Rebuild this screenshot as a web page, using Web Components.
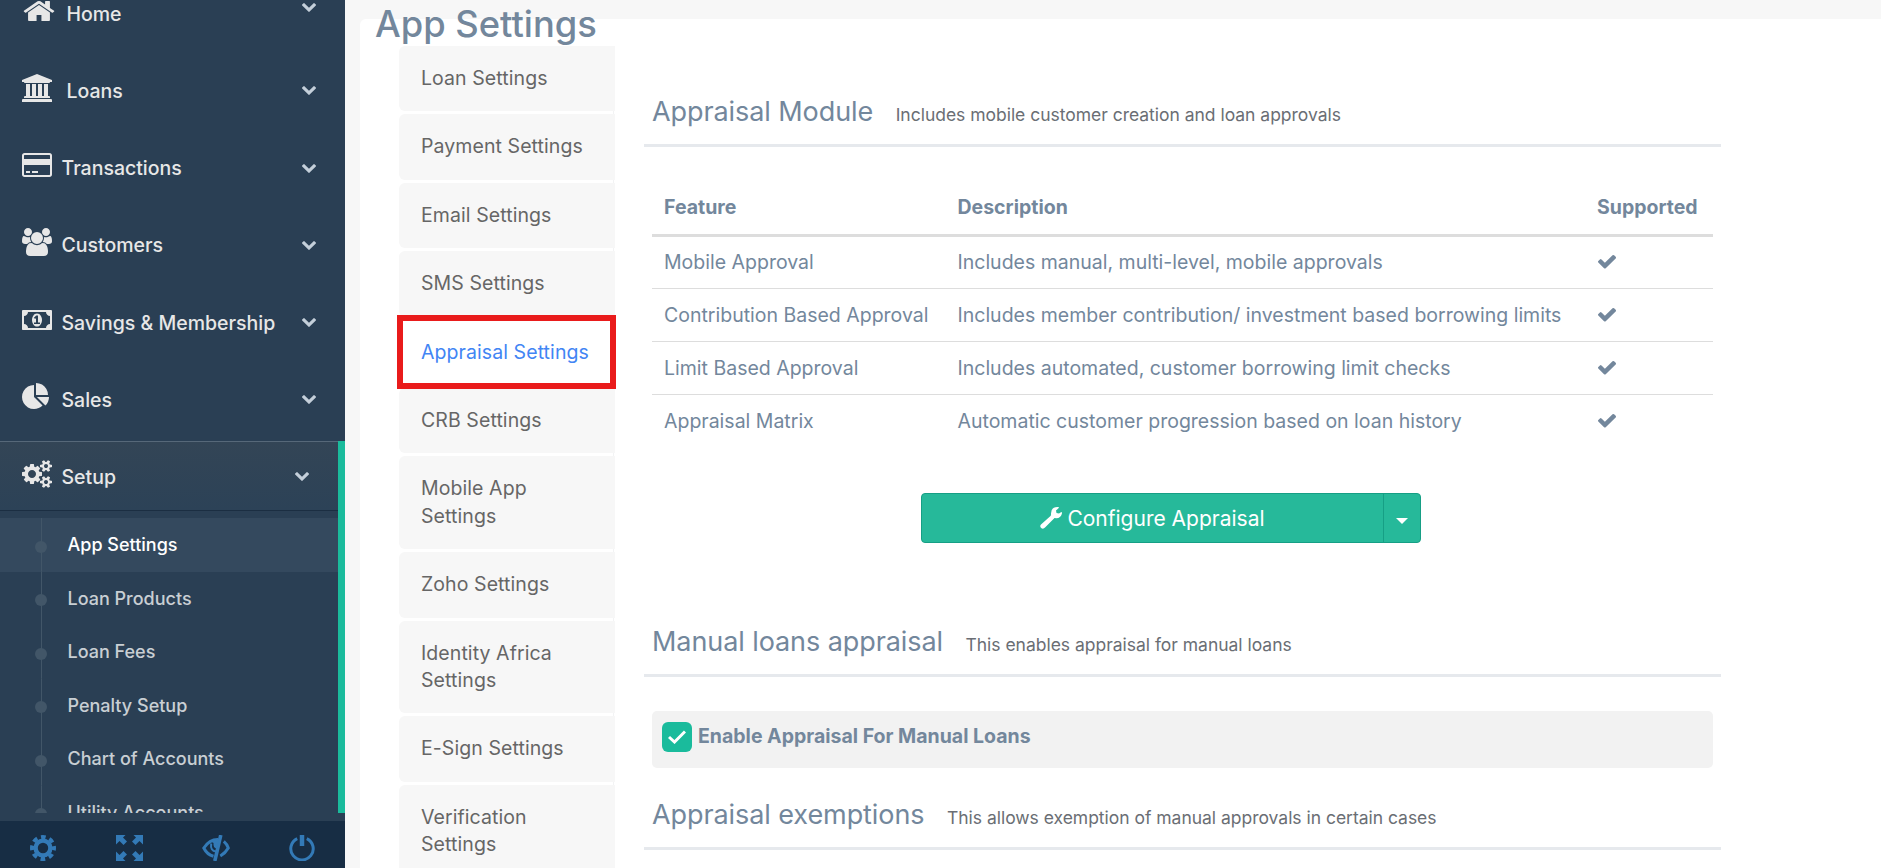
<!DOCTYPE html>
<html lang="en">
<head>
<meta charset="utf-8">
<title>App Settings</title>
<style>
  body {
    margin: 0;
    height: 868px;
    overflow: hidden;
    background: #f7f7f7;
    font-family: Inter, "Liberation Sans", sans-serif;
    font-size: 19.5px;
    color: #73879c;
  }
</style>
</head>
<body>
<app-shell>
  <side-menu slot="side">
    <menu-item icon="home" wide>Home</menu-item>
    <menu-item icon="bank" wide>Loans</menu-item>
    <menu-item icon="card">Transactions</menu-item>
    <menu-item icon="users">Customers</menu-item>
    <menu-item icon="money">Savings &amp; Membership</menu-item>
    <menu-item icon="pie">Sales</menu-item>
    <menu-item icon="cogs" active>Setup
      <sub-item slot="sub" current>App Settings</sub-item>
      <sub-item slot="sub">Loan Products</sub-item>
      <sub-item slot="sub">Loan Fees</sub-item>
      <sub-item slot="sub">Penalty Setup</sub-item>
      <sub-item slot="sub">Chart of Accounts</sub-item>
      <sub-item slot="sub">Utility Accounts</sub-item>
    </menu-item>
  </side-menu>
  <page-title slot="title">App Settings</page-title>
  <tab-list slot="tabs">
    <tab-item>Loan Settings</tab-item>
    <tab-item>Payment Settings</tab-item>
    <tab-item>Email Settings</tab-item>
    <tab-item>SMS Settings</tab-item>
    <tab-item active>Appraisal Settings</tab-item>
    <tab-item>CRB Settings</tab-item>
    <tab-item>Mobile App Settings</tab-item>
    <tab-item>Zoho Settings</tab-item>
    <tab-item>Identity Africa Settings</tab-item>
    <tab-item>E-Sign Settings</tab-item>
    <tab-item>Verification Settings</tab-item>
  </tab-list>
  <section-title note="Includes mobile customer creation and loan approvals">Appraisal Module</section-title>
  <feature-table></feature-table>
  <split-button>Configure Appraisal</split-button>
  <section-title note="This enables appraisal for manual loans">Manual loans appraisal</section-title>
  <check-row>Enable Appraisal For Manual Loans</check-row>
  <section-title note="This allows exemption of manual approvals in certain cases">Appraisal exemptions</section-title>
</app-shell>

<script>
const icons = {
  home: ['0 0 1792 1792', '<path d="M1472 992v480q0 26-19 45t-45 19h-384v-384h-256v384h-384q-26 0-45-19t-19-45v-480q0-1 .5-3t.5-3l575-474 575 474q1 2 1 6zm223-69l-62 74q-8 9-21 11h-3q-13 0-21-7l-692-577-692 577q-12 8-24 7-13-2-21-11l-62-74q-8-10-7-23.5t11-21.5l719-599q32-26 76-26t76 26l244 204v-195q0-14 9-23t23-9h192q14 0 23 9t9 23v408l219 182q10 8 11 21.5t-7 23.5z"/>'],
  bank: ['0 0 1920 1792', '<path d="M960 0l960 384v128h-128q0 26-20.5 45t-48.5 19h-1526q-28 0-48.5-19t-20.5-45h-128v-128zm-704 640h256v768h128v-768h256v768h128v-768h256v768h128v-768h256v768h59q28 0 48.5 19t20.5 45v64h-1664v-64q0-26 20.5-45t48.5-19h59v-768zm1595 960q28 0 48.5 19t20.5 45v128h-1920v-128q0-26 20.5-45t48.5-19h1782z"/>'],
  card: ['0 0 1920 1792', '<path d="M1760 128q66 0 113 47t47 113v1216q0 66-47 113t-113 47h-1600q-66 0-113-47t-47-113v-1216q0-66 47-113t113-47h1600zm-1600 128q-13 0-22.5 9.5t-9.5 22.5v224h1664v-224q0-13-9.5-22.5t-22.5-9.5h-1600zm1600 1280q13 0 22.5-9.5t9.5-22.5v-608h-1664v608q0 13 9.5 22.5t22.5 9.5h1600zm-1504-128v-128h256v128h-256zm384 0v-128h384v128h-384z"/>'],
  users: ['0 0 1920 1792', '<path d="M593 896q-162 5-265 128h-134q-82 0-138-40.5t-56-118.5q0-353 124-353 6 0 43.5 21t97.5 42.5 119 21.5q67 0 133-23-5 37-5 66 0 139 81 256zm1071 637q0 120-73 189.5t-194 69.5h-874q-121 0-194-69.5t-73-189.5q0-53 3.5-103.5t14-109 26.5-108.5 43-97.5 62-81 85.5-53.5 111.5-20q10 0 43 21.5t73 48 107 48 135 21.5 135-21.5 107-48 73-48 43-21.5q61 0 111.5 20t85.5 53.5 62 81 43 97.5 26.5 108.5 14 109 3.5 103.5zm-1024-1277q0 106-75 181t-181 75-181-75-75-181 75-181 181-75 181 75 75 181zm704 384q0 159-112.5 271.5t-271.5 112.5-271.5-112.5-112.5-271.5 112.5-271.5 271.5-112.5 271.5 112.5 112.5 271.5zm576 225q0 78-56 118.5t-138 40.5h-134q-103-123-265-128 81-117 81-256 0-29-5-66 66 23 133 23 59 0 119-21.5t97.5-42.5 43.5-21q124 0 124 353zm-128-609q0 106-75 181t-181 75-181-75-75-181 75-181 181-75 181 75 75 181z"/>'],
  money: ['0 0 1920 1792', '<path d="M768 1152h384v-96h-128v-448h-114l-148 137 77 80q42-37 55-57h2v288h-128v96zm512-256q0 70-21 142t-59.5 134-101.5 101-138 39-138-39-101.5-101-59.5-134-21-142 21-142 59.5-134 101.5-101 138-39 138 39 101.5 101 59.5 134 21 142zm512 256v-512q-106 0-181-75t-75-181h-1152q0 106-75 181t-181 75v512q106 0 181 75t75 181h1152q0-106 75-181t181-75zm128-832v1152q0 26-19 45t-45 19h-1792q-26 0-45-19t-19-45v-1152q0-26 19-45t45-19h1792q26 0 45 19t19 45z"/>'],
  pie: ['0 0 1792 1792', '<path d="M768 890l546 546q-106 108-247.5 168t-298.5 60q-209 0-385.5-103t-279.5-279.5-103-385.5 103-385.5 279.5-279.5 385.5-103v762zm187 6h773q0 157-60 298.5t-168 247.5zm709-128h-768v-768q209 0 385.5 103t279.5 279.5 103 385.5z"/>'],
  cogs: ['0 0 1920 1792', '<path d="M896 896q0-106-75-181t-181-75-181 75-75 181 75 181 181 75 181-75 75-181zm768 512q0-52-38-90t-90-38-90 38-38 90q0 53 37.5 90.5t90.5 37.5 90.5-37.5 37.5-90.5zm0-1024q0-52-38-90t-90-38-90 38-38 90q0 53 37.5 90.5t90.5 37.5 90.5-37.5 37.5-90.5zm-384 421v185q0 10-7 19.5t-16 10.5l-155 24q-11 35-32 76 34 48 90 115 7 11 7 20 0 12-7 19-23 30-82.5 89.5t-78.5 59.5q-11 0-21-7l-115-90q-37 19-77 31-11 108-23 155-7 24-30 24h-186q-11 0-20-7.5t-10-17.5l-23-153q-34-10-75-31l-118 89q-7 7-20 7-11 0-21-8-144-133-144-160 0-9 7-19 10-14 41-53t47-61q-23-44-35-82l-152-24q-10-1-17-9.5t-7-19.5v-185q0-10 7-19.5t16-10.5l155-24q11-35 32-76-34-48-90-115-7-11-7-20 0-12 7-20 22-30 82-89t79-59q11 0 21 7l115 90q34-18 77-32 11-108 23-154 7-24 30-24h186q11 0 20 7.5t10 17.5l23 153q34 10 75 31l118-89q8-7 20-7 11 0 21 8 144 133 144 160 0 8-7 19-12 16-42 54t-45 60q23 48 34 82l152 23q10 2 17 10.5t7 19.5zm640 533v140q0 16-149 31-12 27-30 52 51 113 51 138 0 4-4 7-122 71-124 71-8 0-46-47t-52-68q-20 2-30 2t-30-2q-14 21-52 68t-46 47q-2 0-124-71-4-3-4-7 0-25 51-138-18-25-30-52-149-15-149-31v-140q0-16 149-31 13-29 30-52-51-113-51-138 0-4 4-7 4-2 35-20t59-34 30-16q8 0 46 46.5t52 67.5q20-2 30-2t30 2q51-71 92-112l6-2q4 0 124 70 4 3 4 7 0 25-51 138 17 23 30 52 149 15 149 31zm0-1024v140q0 16-149 31-12 27-30 52 51 113 51 138 0 4-4 7-122 71-124 71-8 0-46-47t-52-68q-20 2-30 2t-30-2q-14 21-52 68t-46 47q-2 0-124-71-4-3-4-7 0-25 51-138-18-25-30-52-149-15-149-31v-140q0-16 149-31 13-29 30-52-51-113-51-138 0-4 4-7 4-2 35-20t59-34 30-16q8 0 46 46.5t52 67.5q20-2 30-2t30 2q51-71 92-112l6-2q4 0 124 70 4 3 4 7 0 25-51 138 17 23 30 52 149 15 149 31z"/>'],
  down: ['90 533 1612 1035', '<path d="M1683 808l-742 741q-19 19-45 19t-45-19l-742-741q-19-19-19-45.5t19-45.5l166-165q19-19 45-19t45 19l531 531 531-531q19-19 45-19t45 19l166 165q19 19 19 45.5t-19 45.5z"/>'],
  check: ['121 334 1550 1188', '<path d="M1671 566q0 40-28 68l-724 724-136 136q-28 28-68 28t-68-28l-136-136-362-362q-28-28-28-68t28-68l136-136q28-28 68-28t68 28l294 295 656-657q28-28 68-28t68 28l136 136q28 28 28 68z"/>'],
  wrench: ['0 0 22 22', '<path d="M11 6.500Q11 0 17.500 0Q19.500 0 19 .8L16 3.500L16.500 6L19 6.500L21.300 5Q22.300 5 21.800 7Q20.500 12 14.500 11L5 20.500Q3.500 22.300 1.500 21.300Q-.7 19.500 1 17.500L10.500 9Q11.200 8 11 6.500z"/>'],
  gear: ['0 0 26 26', '<g fill="none" stroke="currentColor"><circle cx="13" cy="13" r="7.400" stroke-width="4.400"/><circle cx="13" cy="13" r="11" stroke-width="4" stroke-dasharray="4.700 3.940" stroke-dashoffset="2.350"/></g>'],
  full: ['0 0 27 26', '<path d="M0 0h9.500L7 2.500l4 4L7.500 10l-4-4L0 9.500zM27 0v9.500L23.500 6l-4 4L16 6.500l4-4L17.500 0zM0 26v-9.500L3.500 20l4-4 3.500 3.500-4 4L9.500 26zM27 26h-9.500l2.500-2.500-4-4 3.500-3.500 4 4 3.500-3.500z"/>'],
  eye: ['0 0 28 26', '<g fill="none" stroke="currentColor"><path d="M11.500 21.300Q5 19.500 1.800 13Q7.500 4.300 16 4.500M21.800 6.300Q25 9 26.300 13Q23.500 18 18.300 21" stroke-width="3"/><path d="M9.200 8.500Q8 16 14.200 16.500" stroke-width="2"/><path d="M18.800 0L12.800 26" stroke-width="3.600"/></g><path d="M9 6.500L17 4L14.800 13.500Q11 13 11.500 8z"/>'],
  off: ['0 0 26 26', '<g fill="none" stroke="currentColor"><path d="M8.200 3.600A11.200 11.200 0 1 0 17.800 3.600" stroke-width="3"/><path d="M13 0v11" stroke-width="4.500"/></g>']
}

/**
 * Builds the svg markup of one icon.
 */
const svg = (name, w, h) =>
  `<svg class="icon" width="${w}" height="${h}" viewBox="${icons[name][0]}" preserveAspectRatio="none" fill="currentColor">${icons[name][1]}</svg>`

/**
 * Registers an element whose shadow root comes from a markup function.
 */
const define = (name, markup) => customElements.define(name,
  class extends HTMLElement {
    constructor () {
      super()
      const template = document.createElement('template')
      template.innerHTML = markup(this)
      this.attachShadow({ mode: 'open' }).appendChild(template.content.cloneNode(true))
    }
  }
)

define('app-shell', () => `
  <style>
    :host { display: grid; grid-template-columns: 345px 1fr; height: 868px; overflow: hidden; }
    main { padding: 19px 0 0 15px; min-width: 0; }
    .panel { display: grid; grid-template-columns: 216px 1077px; column-gap: 29px; grid-template-rows: 27px 1fr; box-sizing: border-box; height: 900px; padding-left: 39px; background: #fff; border-radius: 6px 0 0 0; }
    .head { grid-column: 1 / 3; margin-left: -24px; }
    .content { display: flex; flex-direction: column; padding-top: 34px; }
  </style>
  <slot name="side"></slot>
  <main>
    <div class="panel">
      <div class="head"><slot name="title"></slot></div>
      <slot name="tabs"></slot>
      <div class="content"><slot></slot></div>
    </div>
  </main>
`)

define('side-menu', () => `
  <style>
    :host { display: flex; flex-direction: column; height: 868px; background: #2a3f54; color: #e7e7e7; overflow: hidden; }
    nav { height: 813px; flex: none; overflow: hidden; }
    .items { margin-top: -22.5px; }
    footer { display: grid; grid-template-columns: repeat(4, 1fr); justify-items: center; align-items: center; margin-top: 8px; height: 54px; flex: none; background: #172d44; color: #337ab7; }
    svg { display: block; }
  </style>
  <nav><div class="items"><slot></slot></div></nav>
  <footer>${svg('gear', 26, 26)}${svg('full', 27, 26)}${svg('eye', 28, 26)}${svg('off', 26, 26)}</footer>
`)

define('menu-item', el => `
  <style>
    :host { display: block; font-weight: 500; }
    .row { display: flex; align-items: center; box-sizing: border-box; height: 77.25px; padding: 0 29px 5px 22px; }
    .glyph { width: 39.5px; height: 34px; flex: none; }
    :host([wide]) .glyph { width: 44.5px; }
    .text { flex: 1; white-space: nowrap; }
    .arrow { color: #c4cfda; height: 9px; }
    :host([icon="home"]) .arrow { margin-top: -13px; }
    .arrow svg, .glyph svg { display: block; }
    :host([active]) { border-right: 7px solid #1abb9c; }
    :host([active]) .row { height: 70px; padding: 1px 29px 0 22px; border-top: 1px solid #566879; border-bottom: 1px solid #1b2e42; background: linear-gradient(#334556, #2c4257); }
    .sub { display: none; }
    :host([active]) .sub { display: block; padding-top: 7px; }
  </style>
  <div class="row">
    <span class="glyph">${svg(el.getAttribute('icon'), el.getAttribute('icon') === 'home' ? 34 : el.getAttribute('icon') === 'pie' ? 28 : 30, 28)}</span>
    <span class="text"><slot></slot></span>
    <span class="arrow">${svg('down', 14, 9)}</span>
  </div>
  <div class="sub"><slot name="sub"></slot></div>
`)

define('sub-item', () => `
  <style>
    :host { display: flex; align-items: center; height: 53.5px; font-size: 18px; color: rgba(255, 255, 255, .75); }
    :host([current]) { background: #34495e; color: #fff; }
    .rail { display: flex; align-items: center; justify-content: center; width: 12px; height: 100%; margin: 0 20.5px 0 35px; background: linear-gradient(#425668, #425668) center / 1px 100% no-repeat; }
    .dot { width: 12px; height: 12px; border-radius: 50%; background: #425668; position: relative; top: 2px; }
  </style>
  <span class="rail"><span class="dot"></span></span>
  <slot></slot>
`)

define('page-title', () => `
  <style>
    :host { display: block; margin-top: -17px; font-size: 36.3px; font-weight: 500; line-height: 44px; white-space: nowrap; }
  </style>
  <slot></slot>
`)

define('tab-list', () => `
  <style>
    :host { display: block; box-sizing: border-box; background: linear-gradient(#f2f3f4, #f2f3f4) 214px 0 / 1px 100% no-repeat; }
  </style>
  <slot></slot>
`)

define('tab-item', () => `
  <style>
    :host { display: block; position: relative; box-sizing: border-box; margin-bottom: 3px; padding: 19px 20px 19px 22px; line-height: 27.4px; letter-spacing: .08px; color: #666; background: #f7f7f7; border-radius: 6px 0 0 6px; }
    :host([active]) { color: #4285f4; background: #fff; white-space: nowrap; }
    .mark { display: none; }
    :host([active]) .mark { display: block; position: absolute; z-index: 1; inset: -5px -1px -4px -2px; border: 6px solid #e91b1b; }
  </style>
  <slot></slot><span class="mark"></span>
`)

define('section-title', el => `
  <style>
    :host { display: flex; align-items: baseline; box-sizing: border-box; height: 67px; padding: 14px 8px 0; border-bottom: 3px solid #e6e9ed; font-size: 27px; line-height: 36px; letter-spacing: -.08px; white-space: nowrap; }
    small { margin-left: 22.5px; font-size: 17.5px; letter-spacing: -.02px; color: #6a6e74; }
  </style>
  <slot></slot><small>${el.getAttribute('note')}</small>
`)

const features = [
  ['Mobile Approval', 'Includes manual, multi-level, mobile approvals'],
  ['Contribution Based Approval', 'Includes member contribution/ investment based borrowing limits'],
  ['Limit Based Approval', 'Includes automated, customer borrowing limit checks'],
  ['Appraisal Matrix', 'Automatic customer progression based on loan history']
]

define('feature-table', () => `
  <style>
    :host { display: block; margin: 32px 8px 0; }
    .row { display: grid; grid-template-columns: 293.5px 639.5px 1fr; align-items: center; box-sizing: border-box; height: 53px; padding-left: 12px; border-top: 1px solid #ddd; white-space: nowrap; }
    .head { height: 55px; border: 0; font-weight: 700; }
    .head + .row { border-top-width: 3px; height: 54px; padding-bottom: 1px; }
    svg { display: block; margin-left: 1px; }
  </style>
  <div class="row head"><span>Feature</span><span>Description</span><span>Supported</span></div>
  ${features.map(([name, text]) => `<div class="row"><span>${name}</span><span>${text}</span><span>${svg('check', 18, 13.5)}</span></div>`).join('')}
`)

define('split-button', () => `
  <style>
    :host { display: flex; align-self: flex-start; box-sizing: border-box; width: 500px; height: 50px; margin: 46px 0 67px 277px; border: 1px solid #169f85; border-radius: 4px; background: #26b99a; color: #fff; font-size: 21px; }
    .main { display: flex; flex: 1; align-items: center; justify-content: center; gap: 5px; }
    .toggle { display: flex; width: 36px; align-items: center; justify-content: center; border-left: 1px solid #169f85; }
    .caret { margin-top: 5px; border: 6px solid transparent; border-top-color: #fff; border-bottom: 0; }
  </style>
  <span class="main">${svg('wrench', 22, 22)}<span><slot></slot></span></span>
  <span class="toggle"><span class="caret"></span></span>
`)

define('check-row', () => `
  <style>
    :host { display: flex; box-sizing: border-box; height: 57px; margin: 34px 8px 15px; padding: 11px 10px; gap: 6px; border-radius: 5px; background: #f2f2f2; font-weight: 700; line-height: 28px; }
    .box { display: flex; align-items: center; justify-content: center; width: 30px; height: 30px; border-radius: 6px; background: #1abb9c; }
  </style>
  <span class="box"><svg width="18" height="14" viewBox="0 0 18 14" fill="none" stroke="#fff" stroke-width="3"><path d="M1 7l5.500 5L17 1.500"/></svg></span>
  <span><slot></slot></span>
`)
</script>
</body>
</html>
